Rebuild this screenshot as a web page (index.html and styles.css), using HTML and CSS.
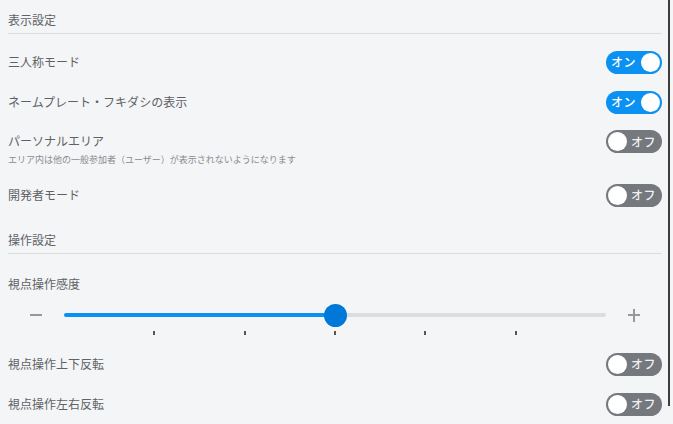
FILE: index.html
```html
<!DOCTYPE html>
<html lang="ja">
<head>
<meta charset="utf-8">
<link rel="stylesheet" href="styles.css">
</head>
<body>
<div class="panel">
  <div class="section-title">表示設定</div>
  <div class="row first">
    <span class="label">三人称モード</span>
    <span class="toggle on"><span class="toggle-text">オン</span><span class="knob"></span></span>
  </div>
  <div class="row">
    <span class="label">ネームプレート・フキダシの表示</span>
    <span class="toggle on"><span class="toggle-text">オン</span><span class="knob"></span></span>
  </div>
  <div class="row tall">
    <div class="label-group">
      <span class="label">パーソナルエリア</span>
      <span class="sub">エリア内は他の一般参加者（ユーザー）が表示されないようになります</span>
    </div>
    <span class="toggle off"><span class="knob"></span><span class="toggle-text">オフ</span></span>
  </div>
  <div class="row">
    <span class="label">開発者モード</span>
    <span class="toggle off"><span class="knob"></span><span class="toggle-text">オフ</span></span>
  </div>
  <div class="section-title second">操作設定</div>
  <div class="slider-block">
    <div class="label">視点操作感度</div>
    <div class="slider">
      <span class="step-btn"><span class="bar-h"></span></span>
      <div class="track">
        <div class="track-fill" style="width:50%"></div>
        <div class="thumb" style="left:50%"></div>
        <span class="tick" style="left:16.667%"></span>
        <span class="tick" style="left:33.333%"></span>
        <span class="tick" style="left:50%"></span>
        <span class="tick" style="left:66.667%"></span>
        <span class="tick" style="left:83.333%"></span>
      </div>
      <span class="step-btn"><span class="plus"><span class="bar-h"></span><span class="bar-v"></span></span></span>
    </div>
  </div>
  <div class="row">
    <span class="label">視点操作上下反転</span>
    <span class="toggle off"><span class="knob"></span><span class="toggle-text">オフ</span></span>
  </div>
  <div class="row">
    <span class="label">視点操作左右反転</span>
    <span class="toggle off"><span class="knob"></span><span class="toggle-text">オフ</span></span>
  </div>
</div>
</body>
</html>
```
FILE: styles.css
```css
html, body {
  margin: 0;
  padding: 0;
  background: #f4f5f7;
  font-family: "Noto Sans CJK JP", "Noto Sans", sans-serif;
  color: #606165;
}
.panel {
  position: relative;
  box-sizing: border-box;
  width: 670px;
  padding: 0 8px 0 8px;
}
.panel::after {
  content: "";
  position: absolute;
  top: 0;
  right: 0;
  width: 2px;
  height: 406px;
  background: #3e3e3e;
}
.section-title, .row, .slider-block {
  width: 654px;
}
.section-title {
  font-size: 12px;
  line-height: 16px;
  padding: 12px 0 5px;
  border-bottom: 1px solid #dcdde0;
  color: #606266;
}
.section-title.second {
  margin-top: 5px;
}
.row {
  display: flex;
  align-items: center;
  justify-content: space-between;
  height: 40px;
}
.row.first {
  margin-top: 8px;
}
.row.tall {
  height: auto;
  align-items: flex-start;
  padding: 8px 0 4px;
}
.label {
  font-size: 12px;
  line-height: 16px;
}
.label-group {
  display: flex;
  flex-direction: column;
  padding-top: 3px;
}
.sub {
  font-size: 9px;
  line-height: 22px;
  color: #8a8b8f;
}
.toggle {
  box-sizing: border-box;
  display: flex;
  align-items: center;
  width: 56px;
  height: 23px;
  border-radius: 12px;
  padding: 2px;
  gap: 4px;
}
.toggle.on {
  background: #0b91f1;
  justify-content: flex-end;
}
.toggle.off {
  background: #75787d;
  justify-content: flex-start;
}
.knob {
  width: 19px;
  height: 19px;
  border-radius: 50%;
  background: #fff;
  flex: none;
}
.toggle-text {
  font-size: 12px;
  line-height: 14px;
  font-weight: 500;
  color: #fff;
  letter-spacing: 0.5px;
}
.toggle.on .toggle-text {
  margin-right: 1px;
}
.toggle.off .toggle-text {
  color: #f0f0f0;
}
.slider-block {
  padding-top: 22px;
  height: 68px;
}
.slider {
  display: flex;
  align-items: center;
  height: 24px;
  margin-top: 11px;
}
.step-btn {
  width: 56px;
  height: 24px;
  flex: none;
  display: flex;
  justify-content: center;
  align-items: center;
}
.bar-h {
  display: block;
  width: 12px;
  height: 2px;
  background: #97989b;
}
.plus {
  position: relative;
  width: 12px;
  height: 12px;
  display: flex;
  align-items: center;
  justify-content: center;
  margin-left: -1px;
}
.plus .bar-h {
  width: 13px;
  height: 1.5px;
}
.bar-v {
  position: absolute;
  left: 5.5px;
  top: -0.5px;
  width: 1.5px;
  height: 13px;
  background: #97989b;
}
.track {
  position: relative;
  flex: 1;
  height: 4px;
  border-radius: 2px;
  background: #dcdde0;
}
.track-fill {
  height: 4px;
  border-radius: 2px;
  background: #0b91f1;
}
.thumb {
  position: absolute;
  top: 2px;
  width: 23px;
  height: 23px;
  margin: -11.5px 0 0 -11.5px;
  border-radius: 50%;
  background: #0078d8;
}
.tick {
  position: absolute;
  top: 18px;
  width: 2px;
  height: 4px;
  margin-left: -1px;
  background: #555;
}
```
